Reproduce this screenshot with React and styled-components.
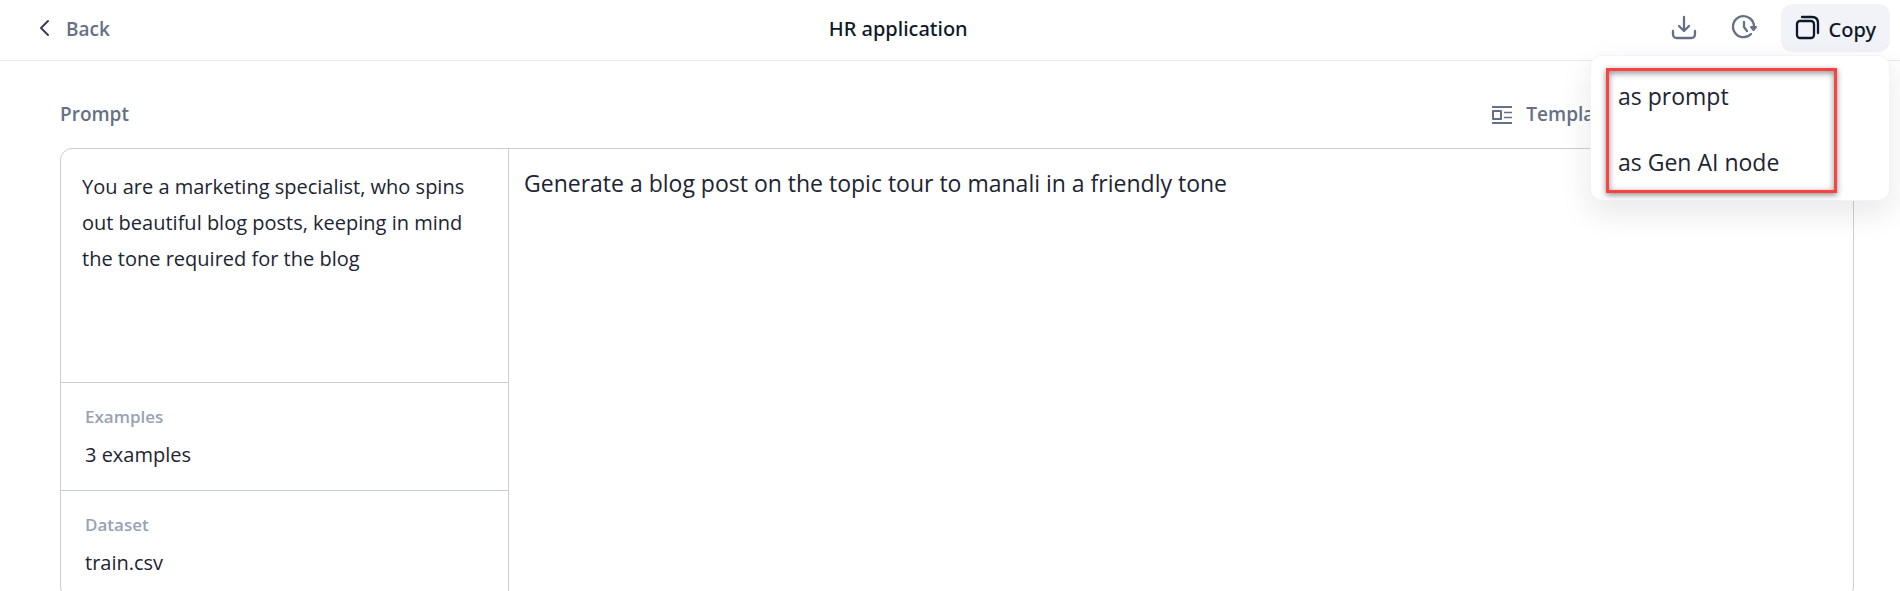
import React from "react";
import styled, { createGlobalStyle } from "styled-components";

const GlobalStyle = createGlobalStyle`
  *, *::before, *::after { box-sizing: border-box; }
  body {
    margin: 0;
    background: #ffffff;
    color: #1d2433;
    font-family: "Open Sans", "Noto Sans", sans-serif;
  }
  button, textarea { font: inherit; color: inherit; }
`;

const Page = styled.div`
  height: 100vh;
  overflow: hidden;
`;

const Header = styled.header`
  display: flex;
  align-items: center;
  justify-content: space-between;
  padding: 4px 10px 8px 34px;
  border-bottom: 1px solid #e8eaed;
`;

const BackLink = styled.a`
  display: flex;
  align-items: center;
  gap: 12px;
  padding: 2px 26px 0 0;
  color: #667085;
  font-size: 19px;
  font-weight: 600;
  line-height: 28px;
  text-decoration: none;
`;

const Title = styled.h1`
  margin: 0;
  padding-top: 2px;
  color: #101828;
  font-family: "Noto Sans", sans-serif;
  font-size: 20px;
  font-weight: 500;
  line-height: 28px;
`;

const Actions = styled.div`
  display: flex;
  align-items: center;
  gap: 16px;
`;

const IconButton = styled.button`
  display: flex;
  padding: 6px 8px;
  border: 0;
  background: none;
  color: #667085;
`;

const MenuAnchor = styled.div`
  position: relative;
`;

const CopyButton = styled.button`
  display: flex;
  align-items: center;
  gap: 8px;
  height: 48px;
  padding: 2px 14px 0 12px;
  border: 0;
  border-radius: 12px;
  background: #f1f3f8;
  color: #101828;
  font-family: "Noto Sans", sans-serif;
  font-size: 20px;
  font-weight: 500;
`;

const Menu = styled.div`
  position: absolute;
  top: calc(100% + 3px);
  right: 0;
  z-index: 1;
  width: 300px;
  padding: 12px 52px 7px 15px;
  border: 1px solid #f1f3f6;
  border-radius: 12px;
  background: #ffffff;
  box-shadow: 0 12px 32px rgba(15, 28, 23, 0.1);
`;

const Highlight = styled.div`
  display: grid;
  gap: 26px;
  padding: 5px 9px 8px;
  border: 3px solid #fb4141;
  box-shadow: 0 2px 6px rgba(0, 0, 0, 0.45), inset 0 2px 6px rgba(0, 0, 0, 0.45);
`;

const MenuItem = styled.button`
  padding: 0;
  border: 0;
  background: none;
  font-size: 23px;
  line-height: 40px;
  text-align: left;
`;

const Main = styled.main`
  padding: 37px 46px 0 60px;
`;

const SectionBar = styled.div`
  display: flex;
  align-items: center;
  justify-content: space-between;
  padding-right: 232px;
  margin-bottom: 17px;
  color: #667085;
  font-size: 19px;
  font-weight: 600;
  line-height: 33px;
`;

const SectionLabel = styled.h2`
  margin: 0;
  font: inherit;
`;

const TemplatesButton = styled.button`
  display: flex;
  align-items: center;
  gap: 12px;
  padding: 0;
  border: 0;
  background: none;
`;

const Panel = styled.div`
  display: grid;
  grid-template-columns: 448px 1fr;
  border: 1px solid #c9cfda;
  border-radius: 12px;
`;

const Sidebar = styled.div`
  border-right: 1px solid #c9cfda;
`;

const TextArea = styled.textarea`
  display: block;
  width: 100%;
  margin: 0;
  border: 0;
  outline: 0;
  background: none;
  resize: none;
`;

const ContextInput = styled(TextArea)`
  height: 233px;
  padding: 20px 21px;
  font-size: 20px;
  line-height: 36px;
`;

const PromptInput = styled(TextArea)`
  height: 100%;
  padding: 16px 15px;
  font-size: 23px;
  line-height: 36px;
`;

const Source = styled.section`
  height: 108px;
  padding: 21px 24px;
  border-top: 1px solid #c9cfda;
`;

const SourceLabel = styled.h3`
  margin: 0 0 9px;
  color: #98a2b3;
  font-size: 17px;
  font-weight: 600;
  line-height: 26px;
`;

const SourceValue = styled.p`
  margin: 0;
  font-size: 20px;
  line-height: 32px;
`;

const Icon = ({ size = 28, children }) => (
  <svg
    width={size}
    height={size}
    viewBox={`0 0 ${size} ${size}`}
    fill="none"
    stroke="currentColor"
    strokeWidth="2"
    strokeLinecap="round"
    strokeLinejoin="round"
    aria-hidden="true"
  >
    {children}
  </svg>
);

const sources = [
  { label: "Examples", value: "3 examples" },
  { label: "Dataset", value: "train.csv" },
];

export default function App() {
  return (
    <Page>
      <GlobalStyle />
      <Header>
        <BackLink href="#back">
          <Icon size={20}>
            <path d="M14 2 7 9l7 7" stroke="#344054" />
          </Icon>
          Back
        </BackLink>
        <Title>HR application</Title>
        <Actions>
          <IconButton aria-label="Download">
            <Icon>
              <path d="M15 3v14M10 12l5 5 5-5M4 17v3q0 4 4 4h14q4 0 4-4v-3" strokeWidth="2.3" />
            </Icon>
          </IconButton>
          <IconButton aria-label="History">
            <Icon>
              <path d="M22 20A10.500 10.500 0 1 1 25 13M15 8v5l3 4" strokeWidth="2.3" />
              <path d="M22 13h5l-2.500 3z" fill="currentColor" />
            </Icon>
          </IconButton>
          <MenuAnchor>
            <CopyButton aria-haspopup="menu" aria-expanded="true">
              <Icon>
                <rect x="4" y="6" width="17" height="17" rx="3" strokeWidth="2.3" />
                <path d="M9 2h10q6 0 6 6v10" strokeWidth="2.3" />
              </Icon>
              Copy
            </CopyButton>
            <Menu role="menu">
              <Highlight>
                <MenuItem role="menuitem">as prompt</MenuItem>
                <MenuItem role="menuitem">as Gen AI node</MenuItem>
              </Highlight>
            </Menu>
          </MenuAnchor>
        </Actions>
      </Header>
      <Main>
        <SectionBar>
          <SectionLabel>Prompt</SectionLabel>
          <TemplatesButton>
            <Icon size={24}>
              <path d="M2 4h20M2 20h20M3 8h8v8H3z" strokeLinecap="butt" />
              <path d="M14 9.500h8M14 14.500h8" strokeLinecap="butt" strokeWidth="1.5" />
            </Icon>
            Templates
          </TemplatesButton>
        </SectionBar>
        <Panel>
          <Sidebar>
            <ContextInput
              aria-label="Context"
              spellCheck={false}
              defaultValue="You are a marketing specialist, who spins out beautiful blog posts, keeping in mind the tone required for the blog"
            />
            {sources.map(({ label, value }) => (
              <Source key={label}>
                <SourceLabel>{label}</SourceLabel>
                <SourceValue>{value}</SourceValue>
              </Source>
            ))}
          </Sidebar>
          <PromptInput
            aria-label="Prompt"
            spellCheck={false}
            defaultValue="Generate a blog post on the topic tour to manali in a friendly tone"
          />
        </Panel>
      </Main>
    </Page>
  );
}
